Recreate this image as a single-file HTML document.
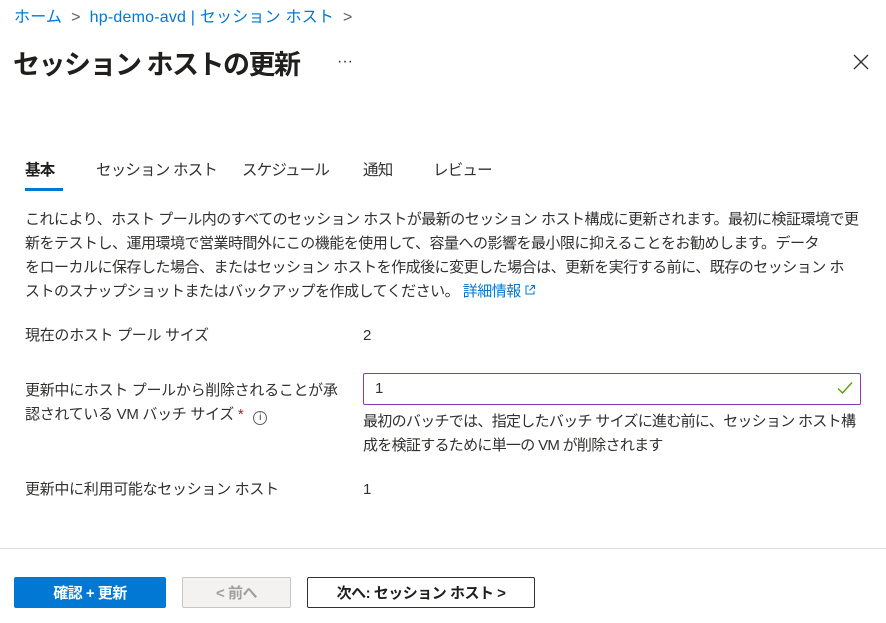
<!DOCTYPE html>
<html><head><meta charset="utf-8"><style>
*{margin:0;padding:0;box-sizing:border-box}
body{width:886px;height:623px;background:#fff;font-family:"Liberation Sans","Noto Sans CJK JP",sans-serif;color:#323130;position:relative;overflow:hidden;font-size:15px}
.a{position:absolute;white-space:nowrap;line-height:20px}
.bc{top:8px;left:14px;color:#0078d4;font-size:16px;letter-spacing:0.2px}
.bc .s{color:#605e5c;margin:0 9px}
h1{position:absolute;top:43px;left:13px;font-size:27px;font-weight:bold;color:#201f1e;letter-spacing:-1.5px}
.tab{top:161px;font-size:15.5px;letter-spacing:-0.8px}
.p{position:absolute;left:25px;top:208px;line-height:24px;font-size:15px;letter-spacing:-0.5px;white-space:nowrap}
.p a{color:#0078d4;text-decoration:none}
.btn{position:absolute;top:577px;height:31px;font-size:15px;font-weight:bold;display:flex;align-items:center;justify-content:center;letter-spacing:-0.5px}
</style></head><body>
<div class="a bc">ホーム<span class="s">&gt;</span>hp-demo-avd | セッション ホスト<span class="s">&gt;</span></div>
<h1>セッション ホストの更新</h1>
<div class="a" style="top:52px;left:337px;font-size:16px;color:#323130">···</div>
<svg class="a" style="top:54px;left:853px" width="16" height="16" viewBox="0 0 16 16"><path d="M1 1L15 15M15 1L1 15" stroke="#323130" stroke-width="1.3"/></svg>
<div class="a tab" style="left:25px;font-weight:bold;color:#201f1e">基本</div>
<div style="position:absolute;left:25px;top:188px;width:38px;height:3px;background:#0078d4"></div>
<div class="a tab" style="left:96px">セッション ホスト</div>
<div class="a tab" style="left:242px">スケジュール</div>
<div class="a tab" style="left:363px">通知</div>
<div class="a tab" style="left:433px">レビュー</div>
<div class="p">これにより、ホスト プール内のすべてのセッション ホストが最新のセッション ホスト構成に更新されます。最初に検証環境で更<br>新をテストし、運用環境で営業時間外にこの機能を使用して、容量への影響を最小限に抑えることをお勧めします。データ<br>をローカルに保存した場合、またはセッション ホストを作成後に変更した場合は、更新を実行する前に、既存のセッション ホ<br>ストのスナップショットまたはバックアップを作成してください。 <a>詳細情報 <svg width="12" height="12" viewBox="0 0 12 12"><path d="M5 2H2v8h8V7M7 1.5h3.5V5M10.5 1.5L5.5 6.5" fill="none" stroke="#0078d4" stroke-width="1"/></svg></a></div>
<div class="a" style="left:25px;top:326px;letter-spacing:-0.3px">現在のホスト プール サイズ</div>
<div class="a" style="left:363px;top:326px">2</div>
<div class="a" style="left:25px;top:379px;line-height:24px;letter-spacing:-0.3px">更新中にホスト プールから削除されることが承<br>認されている VM バッチ サイズ <span style="color:#a4262c">*</span> <span style="display:inline-block;width:14px;height:14px;border:1px solid #605e5c;border-radius:50%;font-size:10px;text-align:center;line-height:12px;margin-left:6px;vertical-align:-1px;letter-spacing:0">i</span></div>
<div style="position:absolute;left:363px;top:373px;width:498px;height:32px;border:1px solid #8a3ab9;border-radius:2px"></div>
<div class="a" style="left:375px;top:379px">1</div>
<svg class="a" style="left:837px;top:381px" width="16" height="14" viewBox="0 0 16 14"><path d="M1 7.5L5.5 12L15 1.5" fill="none" stroke="#57a300" stroke-width="1.4"/></svg>
<div class="a" style="left:363px;top:410px;line-height:24px;letter-spacing:-0.7px">最初のバッチでは、指定したバッチ サイズに進む前に、セッション ホスト構<br>成を検証するために単一の VM が削除されます</div>
<div class="a" style="left:25px;top:480px;letter-spacing:-0.3px">更新中に利用可能なセッション ホスト</div>
<div class="a" style="left:363px;top:480px">1</div>
<div style="position:absolute;left:0;top:548px;width:886px;height:1px;background:#e1dfdd"></div>
<div class="btn" style="left:14px;width:152px;background:#0078d4;color:#fff;border-radius:2px">確認 + 更新</div>
<div class="btn" style="left:182px;width:109px;background:#f3f2f1;color:#a19f9d;border:1px solid #c8c6c4;border-radius:2px">&lt; 前へ</div>
<div class="btn" style="left:307px;width:228px;background:#fff;color:#201f1e;border:1px solid #323130;border-radius:2px">次へ: セッション ホスト &gt;</div>
</body></html>
